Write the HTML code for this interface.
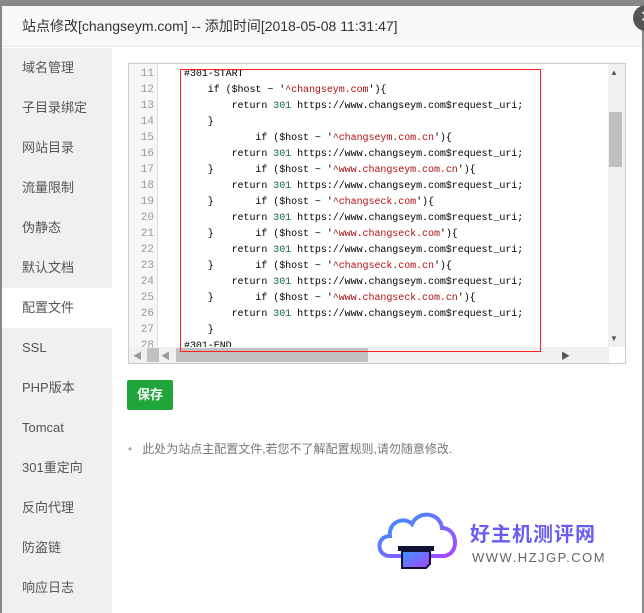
<!DOCTYPE html>
<html><head><meta charset="utf-8"><style>
*{margin:0;padding:0;box-sizing:border-box}
body{width:644px;height:613px;background:#888;position:relative;overflow:hidden;font-family:"Liberation Sans","Noto Sans CJK SC",sans-serif}
.modal{position:absolute;left:2px;top:6px;width:640px;height:607px;background:#fff}
.hd{height:41px;background:#f8f8f8;border-bottom:1px solid #e8e8e8;font-size:14px;color:#333;line-height:41px;padding-left:20px}
.close{position:absolute;left:631px;top:-1px;width:26px;height:26px;border-radius:50%;background:#555;color:#fff;font-size:16px;line-height:26px;text-indent:7px}
.side{position:absolute;left:0;top:42px;width:110px;height:565px;background:#f0f0f0}
.side div{height:40px;line-height:40px;padding-left:20px;font-size:13px;color:#555}
.side .act{background:#fff}
.ed{position:absolute;left:126px;top:57px;width:498px;height:301px;border:1px solid #ccc;background:#fff;overflow:hidden}
.gut{position:absolute;left:0;top:0;width:29px;height:300px;background:#f7f7f7;border-right:1px solid #ddd}
.ln{position:absolute;left:0;width:25px;text-align:right;font:11px "Liberation Mono",monospace;color:#999}
.code{position:absolute;left:55px;font:10px "Liberation Mono","Noto Sans CJK SC",monospace;color:#000;white-space:pre;letter-spacing:-0.05px}
.s{color:#a11}.n{color:#164}
.red{position:absolute;left:51px;top:5px;width:361px;height:283px;border:1px solid #f22;z-index:2}
.vs{position:absolute;right:0;top:0;width:17px;height:283px;background:#f0f0f0}
.hs{position:absolute;left:0;bottom:0;width:480px;height:16px;background:#f0f0f0}
.btn{position:absolute;left:125px;top:374px;width:46px;height:30px;background:#20a53a;color:#fff;font-size:13px;font-weight:bold;line-height:30px;text-align:center;border-radius:2px}
.tip{position:absolute;left:126px;top:434px;font-size:12px;color:#777}
</style></head><body>
<div class="modal">
<div class="hd">站点修改[changseym.com] -- 添加时间[2018-05-08 11:31:47]</div>
<div class="close">✕</div>
<div class="side">
<div>域名管理</div><div>子目录绑定</div><div>网站目录</div><div>流量限制</div><div>伪静态</div><div>默认文档</div><div class="act">配置文件</div><div>SSL</div><div>PHP版本</div><div>Tomcat</div><div>301重定向</div><div>反向代理</div><div>防盗链</div><div>响应日志</div>
</div>
<div class="ed">
<div class="gut"></div>
<div class="ln" style="top:4px">11</div><div class="ln" style="top:20px">12</div><div class="ln" style="top:36px">13</div><div class="ln" style="top:52px">14</div><div class="ln" style="top:68px">15</div><div class="ln" style="top:84px">16</div><div class="ln" style="top:100px">17</div><div class="ln" style="top:116px">18</div><div class="ln" style="top:132px">19</div><div class="ln" style="top:148px">20</div><div class="ln" style="top:164px">21</div><div class="ln" style="top:180px">22</div><div class="ln" style="top:196px">23</div><div class="ln" style="top:212px">24</div><div class="ln" style="top:228px">25</div><div class="ln" style="top:244px">26</div><div class="ln" style="top:260px">27</div><div class="ln" style="top:276px">28</div>
<div class="code" style="top:3px;line-height:16px">#301-START
    if ($host ~ '<span class="s">^changseym.com</span>'){
        return <span class="n">301</span> https://www.changseym.com$request_uri;
    }
            if ($host ~ '<span class="s">^changseym.com.cn</span>'){
        return <span class="n">301</span> https://www.changseym.com$request_uri;
    }       if ($host ~ '<span class="s">^www.changseym.com.cn</span>'){
        return <span class="n">301</span> https://www.changseym.com$request_uri;
    }       if ($host ~ '<span class="s">^changseck.com</span>'){
        return <span class="n">301</span> https://www.changseym.com$request_uri;
    }       if ($host ~ '<span class="s">^www.changseck.com</span>'){
        return <span class="n">301</span> https://www.changseym.com$request_uri;
    }       if ($host ~ '<span class="s">^changseck.com.cn</span>'){
        return <span class="n">301</span> https://www.changseym.com$request_uri;
    }       if ($host ~ '<span class="s">^www.changseck.com.cn</span>'){
        return <span class="n">301</span> https://www.changseym.com$request_uri;
    }
#301-END</div>
<div class="red"></div>
<div class="vs"><div style="position:absolute;left:2px;top:4px;font-size:8px;color:#555">▲</div><div style="position:absolute;left:1px;top:48px;width:13px;height:55px;background:#c0c0c0"></div><div style="position:absolute;left:2px;top:270px;font-size:8px;color:#555">▼</div></div>
<div class="hs"><div style="position:absolute;left:4px;top:2px;font-size:9px;color:#999">◀</div><div style="position:absolute;left:18px;top:1px;width:12px;height:14px;background:#c0c0c0"></div><div style="position:absolute;left:32px;top:2px;font-size:9px;color:#999">◀</div><div style="position:absolute;left:47px;top:1px;width:192px;height:14px;background:#c0c0c0"></div><div style="position:absolute;left:432px;top:2px;font-size:9px;color:#555">▶</div></div>
</div>
<div class="btn">保存</div>
<div class="tip"><span style="color:#aaa;margin-right:10px">•</span>此处为站点主配置文件,若您不了解配置规则,请勿随意修改.</div>
<svg style="position:absolute;left:372px;top:500px" width="90" height="70" viewBox="0 0 90 70">
<defs><linearGradient id="g" x1="0" y1="0" x2="1" y2="1"><stop offset="0" stop-color="#39f"/><stop offset="1" stop-color="#a4f"/></linearGradient></defs>
<path d="M16 50 C2 50 2 30 16 30 C14 16 30 10 38 18 C44 4 66 6 68 22 C84 22 86 48 70 50 Z" fill="none" stroke="url(#g)" stroke-width="4"/>
<rect x="24" y="40" width="36" height="5" fill="#113"/>
<path d="M28 45 H56 V58 L52 62 H28 Z" fill="url(#g)" stroke="#113" stroke-width="2"/>
</svg>
<div style="position:absolute;left:468px;top:512px;font-size:20px;font-weight:bold;color:#6a5cf0;letter-spacing:1px">好主机测评网</div>
<div style="position:absolute;left:470px;top:544px;font-size:13px;color:#666;letter-spacing:1.5px">WWW.HZJGP.COM</div>
</div>
</body></html>
